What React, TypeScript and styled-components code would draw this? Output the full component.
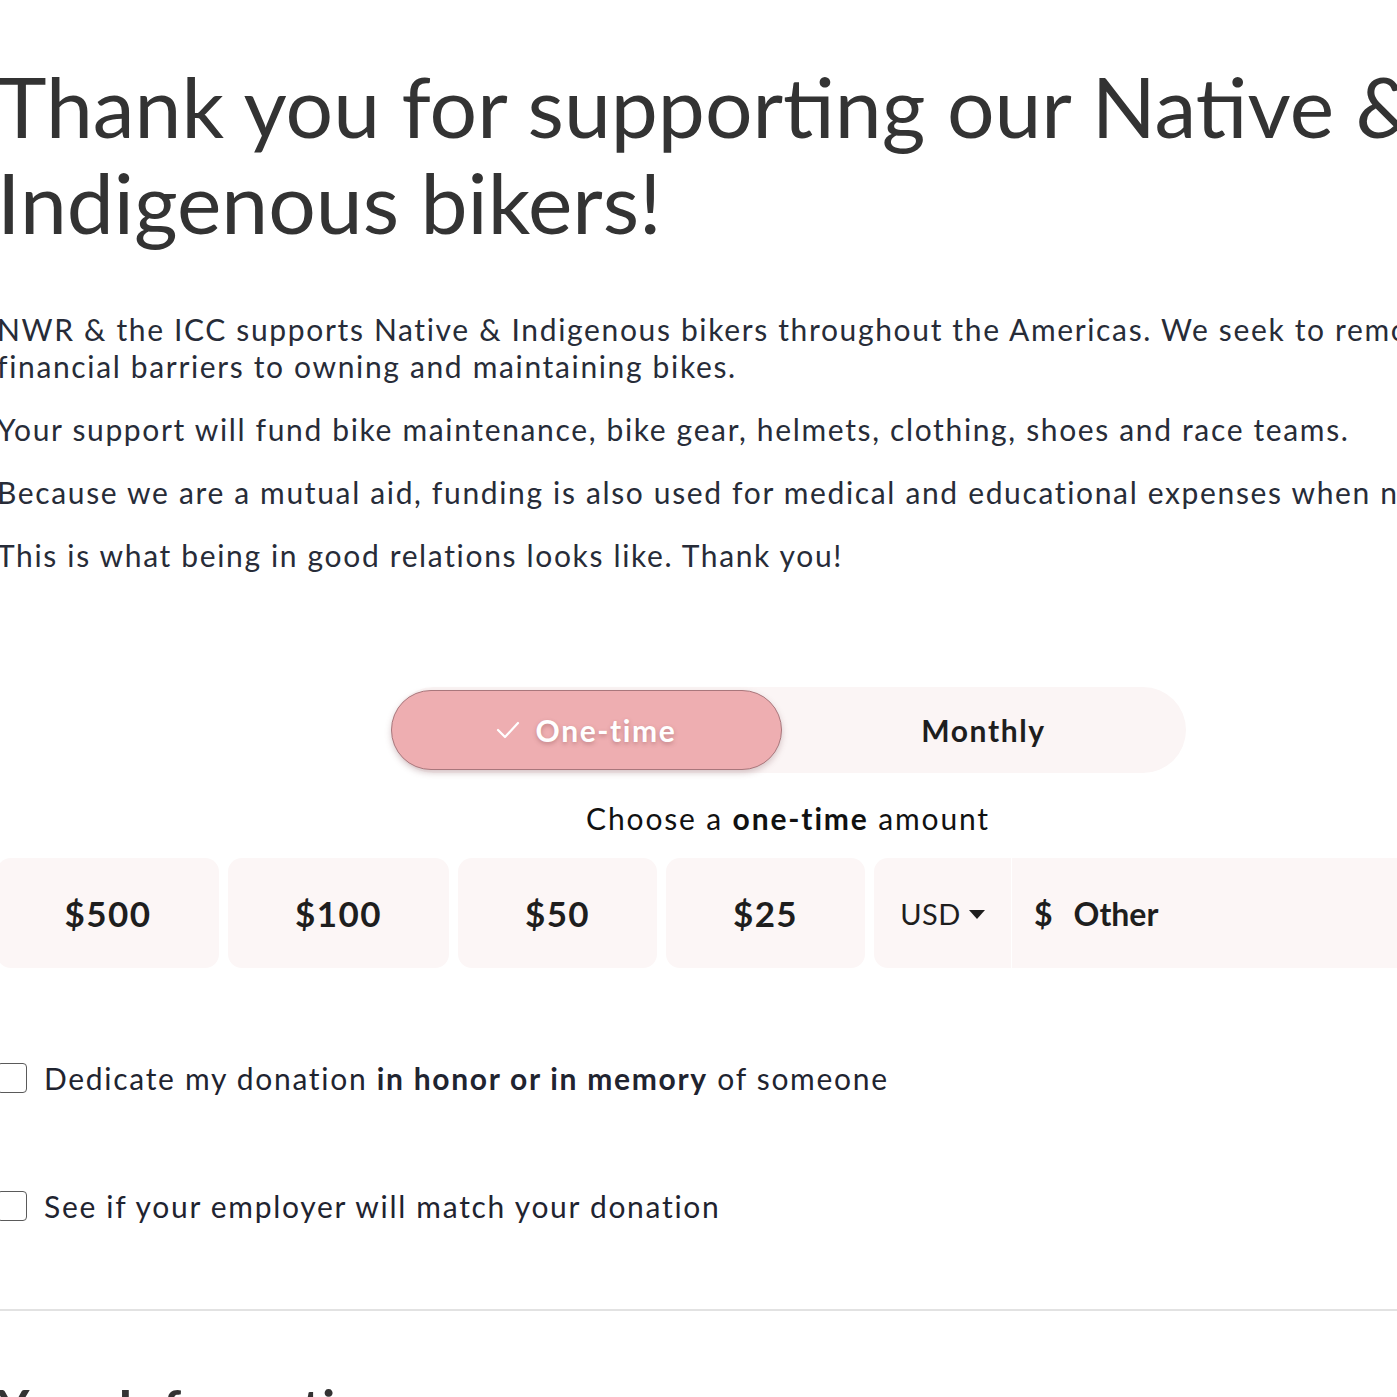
import React from "react";
import styled, { createGlobalStyle } from "styled-components";

const Global = createGlobalStyle`
  html, body { margin: 0; padding: 0; background: #ffffff; overflow: hidden; }
  body { font-family: Lato, "Noto Sans", Arial, sans-serif; }
  * { box-sizing: border-box; }
`;

const Page = styled.main`
  width: 1582px;
  margin-left: -3px;
  padding-top: 58px;
`;

const Title = styled.h1`
  margin: 0;
  font-size: 84px;
  line-height: 96px;
  font-weight: 400;
  color: #333333;
  width: 1460px;
`;

const Intro = styled.section`
  margin-top: 61px;
  display: flex;
  flex-direction: column;
  gap: 26px;
  max-width: 1520px;
`;

const Para = styled.p`
  margin: 0;
  font-size: 30px;
  line-height: 37px;
  letter-spacing: 1.65px;
  color: #272c38;
`;

const FreqWrap = styled.div`
  margin-top: 113px;
  display: flex;
  justify-content: center;
`;

const Toggle = styled.div`
  width: 795px;
  height: 86px;
  border-radius: 43px;
  background: #fbf5f5;
  padding: 3px 0;
  display: grid;
  grid-template-columns: 391px 1fr;
`;

const FreqButton = styled.button<{ $active?: boolean }>`
  font-family: inherit;
  border: ${(p) => (p.$active ? "1.5px solid #a9777c" : "none")};
  border-radius: 40px;
  background: ${(p) => (p.$active ? "#eeaeb1" : "transparent")};
  box-shadow: ${(p) => (p.$active ? "0 3px 6px rgba(120, 70, 75, 0.28)" : "none")};
  color: ${(p) => (p.$active ? "#ffffff" : "#1e1e1e")};
  text-shadow: ${(p) => (p.$active ? "0 2px 4px rgba(140, 80, 85, 0.45)" : "none")};
  font-size: 30px;
  font-weight: 700;
  letter-spacing: 1.6px;
  display: flex;
  align-items: center;
  justify-content: center;
  gap: 16px;
  padding: 0;
`;

const Choose = styled.p`
  margin: 27px 0 0;
  text-align: center;
  font-size: 30px;
  line-height: 37px;
  letter-spacing: 1.85px;
  color: #111111;
  & b { font-weight: 700; }
`;

const Amounts = styled.div`
  margin-top: 21px;
  display: flex;
  gap: 9px;
  height: 110px;
`;

const Amount = styled.button<{ $w: number }>`
  font-family: inherit;
  width: ${(p) => p.$w}px;
  flex: none;
  border: none;
  border-radius: 14px;
  background: #fcf6f6;
  color: #1e1e1e;
  font-size: 35px;
  font-weight: 700;
  letter-spacing: 1.4px;
  padding: 0;
`;

const OtherGroup = styled.div`
  flex: 1;
  display: flex;
  gap: 1px;
  border-radius: 14px;
  overflow: hidden;
`;

const Currency = styled.div`
  width: 137px;
  background: #fcf6f6;
  display: flex;
  align-items: center;
  justify-content: center;
  gap: 8px;
  font-size: 29px;
  letter-spacing: 0.5px;
  color: #1e1e1e;
`;

const Caret = styled.span`
  width: 0;
  height: 0;
  border-left: 8px solid transparent;
  border-right: 8px solid transparent;
  border-top: 9px solid #1e1e1e;
  margin-top: 2px;
`;

const OtherInput = styled.div`
  flex: 1;
  background: #fcf6f6;
  display: flex;
  align-items: center;
  gap: 21px;
  padding-left: 22px;
  font-size: 32px;
  font-weight: 700;
  color: #1e1e1e;
`;

const Options = styled.div`
  margin-top: 95px;
  display: flex;
  flex-direction: column;
  gap: 98px;
`;

const Option = styled.label`
  display: flex;
  align-items: center;
  gap: 17px;
  font-size: 30px;
  line-height: 30px;
  letter-spacing: 1.7px;
  color: #1f2430;
  & b { font-weight: 700; }
`;

const Box = styled.span`
  width: 30px;
  height: 30px;
  flex: none;
  border: 1.5px solid #5a5a5a;
  border-radius: 4px;
  background: #ffffff;
`;

const Divider = styled.hr`
  margin: 88px 0 0;
  border: none;
  border-top: 2px solid #e2e2e2;
`;

const SectionTitle = styled.h2`
  margin: 66px 0 0;
  font-size: 50px;
  line-height: 60px;
  font-weight: 700;
  letter-spacing: 1.5px;
  color: #333333;
`;

const Check = () => (
  <svg width="24" height="20" viewBox="0 0 24 20" fill="none">
    <polyline points="2,10 9,17 22,3" stroke="#ffffff" strokeWidth="2.2" strokeLinecap="round" strokeLinejoin="round" />
  </svg>
);

export default function App() {
  return (
    <>
      <Global />
      <Page>
        <Title>Thank you for supporting our Native &amp; Indigenous bikers!</Title>
        <Intro>
          <Para>
            NWR &amp; the ICC supports Native &amp; Indigenous bikers throughout the Americas. We seek to remove
            financial barriers to owning and maintaining bikes.
          </Para>
          <Para>Your support will fund bike maintenance, bike gear, helmets, clothing, shoes and race teams.</Para>
          <Para>Because we are a mutual aid, funding is also used for medical and educational expenses when needed.</Para>
          <Para>This is what being in good relations looks like. Thank you!</Para>
        </Intro>
        <FreqWrap>
          <Toggle>
            <FreqButton $active>
              <Check />
              One-time
            </FreqButton>
            <FreqButton>Monthly</FreqButton>
          </Toggle>
        </FreqWrap>
        <Choose>
          Choose a <b>one-time</b> amount
        </Choose>
        <Amounts>
          <Amount $w={222}>$500</Amount>
          <Amount $w={221}>$100</Amount>
          <Amount $w={199}>$50</Amount>
          <Amount $w={199}>$25</Amount>
          <OtherGroup>
            <Currency>
              USD <Caret />
            </Currency>
            <OtherInput>
              <span>$</span>
              <span>Other</span>
            </OtherInput>
          </OtherGroup>
        </Amounts>
        <Options>
          <Option>
            <Box />
            <span>
              Dedicate my donation <b>in honor or in memory</b> of someone
            </span>
          </Option>
          <Option>
            <Box />
            <span>See if your employer will match your donation</span>
          </Option>
        </Options>
        <Divider />
        <SectionTitle>Your Information</SectionTitle>
      </Page>
    </>
  );
}
